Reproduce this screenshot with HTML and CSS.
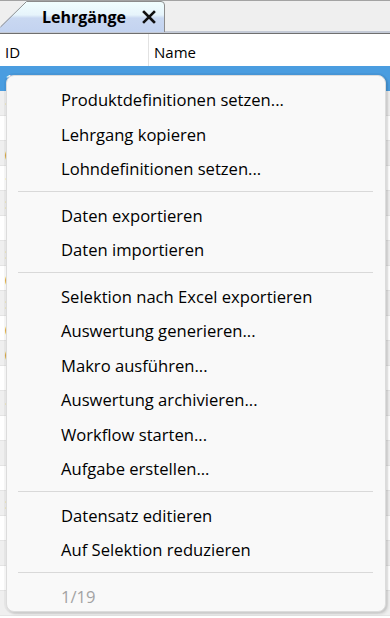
FILE: index.html
```html
<!DOCTYPE html>
<html lang="de">
<head>
    <meta charset="UTF-8">
    <meta name="viewport" content="width=device-width, initial-scale=1.0">
    <title>Lehrgänge</title>
    <link rel="stylesheet" href="styles.css">
</head>
<body>

    <div class="tab-strip">
        <div class="tab">
            <svg class="tab-shape" width="166" height="34" viewBox="0 0 166 34">
                <defs>
                    <linearGradient id="tabfill" x1="0" y1="0" x2="0" y2="1">
                        <stop offset="0" stop-color="#f2ffff"/>
                        <stop offset="0.45" stop-color="#e6f4fb"/>
                        <stop offset="0.55" stop-color="#c9d8f1"/>
                        <stop offset="1" stop-color="#c3d3f0"/>
                    </linearGradient>
                </defs>
                <path d="M0,34 L0,29 L26,3 L161,3 Q165,3 165,7 L165,34 Z" fill="url(#tabfill)"/>
                <path d="M0.5,29 L26.5,3.5 L161,3.5 Q164.5,3.5 164.5,7 L164.5,34" fill="none" stroke="#8c8c8c" stroke-width="1"/>
            </svg>
            <span class="tab-title">Lehrgänge</span>
            <svg class="tab-close" width="14" height="14" viewBox="0 0 14 14">
                <path d="M2,2 L12,12 M12,2 L2,12" stroke="#111" stroke-width="2.6" stroke-linecap="square"/>
            </svg>
        </div>
    </div>

    <div class="grid">
        <div class="grid-head">
            <div class="col col-id">ID</div>
            <div class="col col-name">Name</div>
        </div>
        <div class="row selected"><div class="col col-id">1</div><div class="col col-name"></div></div>
        <div class="row alt"><div class="col col-id">·</div><div class="col col-name"></div></div>
        <div class="row"><div class="col col-id"></div><div class="col col-name"></div></div>
        <div class="row alt"><div class="col col-id">(</div><div class="col col-name"></div></div>
        <div class="row"><div class="col col-id">·</div><div class="col col-name"></div></div>
        <div class="row alt"><div class="col col-id">:</div><div class="col col-name"></div></div>
        <div class="row"><div class="col col-id"></div><div class="col col-name"></div></div>
        <div class="row alt"><div class="col col-id">:</div><div class="col col-name"></div></div>
        <div class="row"><div class="col col-id">(</div><div class="col col-name"></div></div>
        <div class="row alt"><div class="col col-id">:</div><div class="col col-name"></div></div>
        <div class="row"><div class="col col-id">(</div><div class="col col-name"></div></div>
        <div class="row alt"><div class="col col-id">(</div><div class="col col-name"></div></div>
        <div class="row"><div class="col col-id"></div><div class="col col-name"></div></div>
        <div class="row alt"><div class="col col-id">·</div><div class="col col-name"></div></div>
        <div class="row"><div class="col col-id"></div><div class="col col-name"></div></div>
        <div class="row alt"><div class="col col-id"></div><div class="col col-name"></div></div>
        <div class="row"><div class="col col-id"></div><div class="col col-name"></div></div>
        <div class="row alt"><div class="col col-id">:</div><div class="col col-name"></div></div>
        <div class="row"><div class="col col-id"></div><div class="col col-name"></div></div>
        <div class="row alt"><div class="col col-id"></div><div class="col col-name"></div></div>
        <div class="row"><div class="col col-id"></div><div class="col col-name"></div></div>
        <div class="row alt"><div class="col col-id"></div><div class="col col-name"></div></div>

        <!-- Kontextmenü über der Tabelle -->
        <div class="context-menu">
            <div class="menu-item">Produktdefinitionen setzen...</div>
            <div class="menu-item">Lehrgang kopieren</div>
            <div class="menu-item">Lohndefinitionen setzen...</div>
            <div class="menu-sep"></div>
            <div class="menu-item">Daten exportieren</div>
            <div class="menu-item">Daten importieren</div>
            <div class="menu-sep"></div>
            <div class="menu-item">Selektion nach Excel exportieren</div>
            <div class="menu-item">Auswertung generieren...</div>
            <div class="menu-item">Makro ausführen...</div>
            <div class="menu-item">Auswertung archivieren...</div>
            <div class="menu-item">Workflow starten...</div>
            <div class="menu-item">Aufgabe erstellen...</div>
            <div class="menu-sep"></div>
            <div class="menu-item">Datensatz editieren</div>
            <div class="menu-item">Auf Selektion reduzieren</div>
            <div class="menu-sep"></div>
            <div class="menu-item disabled">1/19</div>
        </div>
    </div>

</body>
</html>
```

FILE: styles.css
```css
body {
    margin: 0;
    width: 390px;
    height: 618px;
    overflow: hidden;
    font-family: "Open Sans", "Noto Sans", sans-serif;
    background-color: #ffffff;
    color: #000;
}
.tab-strip {
    height: 33px;
    background-color: #efefef;
    border-top: 1px solid #a3a3a3;
    border-bottom: 2px solid #c4cad6;
    box-shadow: 0 1px 0 #6f6f6f;
    display: flex;
    align-items: flex-end;
    box-sizing: border-box;
}
.tab {
    position: relative;
    width: 166px;
    height: 31px;
    display: flex;
    align-items: center;
    padding-left: 42px;
    box-sizing: border-box;
}
.tab-shape {
    position: absolute;
    left: 0;
    bottom: -1px;
}
.tab-title {
    position: relative;
    font-weight: bold;
    font-size: 16px;
    margin-top: 2px;
}
.tab-close {
    position: relative;
    margin-left: 16px;
    margin-top: 3px;
}
.grid {
    position: relative;
    margin-top: 1px;
    height: 582px;
    overflow: hidden;
}
.grid-head, .row {
    display: flex;
    font-size: 15px;
}
.grid-head {
    height: 32px;
    align-items: center;
}
.grid-head .col {
    padding-top: 4px;
}
.col-id {
    width: 149px;
    padding-left: 5px;
    box-sizing: border-box;
    height: 100%;
    display: flex;
    align-items: center;
}
.grid-head .col-id {
    border-right: 1px solid #e2e2e2;
}
.col-name {
    flex: 1;
    padding-left: 5px;
}
.row {
    height: 25px;
    border-bottom: 1px solid #e4e4e4;
    box-sizing: border-box;
    color: #6b4a10;
}
.row.alt {
    background-color: #efefef;
}
.row.selected {
    background-color: #4a9de0;
    color: #fff;
    border-bottom: none;
}
.context-menu {
    position: absolute;
    left: 6px;
    top: 41px;
    width: 380px;
    height: 537px;
    box-sizing: border-box;
    padding: 7px 0 0 0;
    background-color: #f9f9f9;
    border: 1px solid #dcdcdc;
    border-radius: 8px;
    box-shadow: 0 0 0 2px rgba(0, 0, 0, 0.04), 2px 2px 3px rgba(0, 0, 0, 0.12);
    overflow: hidden;
}
.menu-item {
    height: 34.5px;
    line-height: 34.5px;
    padding-left: 54px;
    font-size: 16.6px;
    color: #000;
    white-space: nowrap;
}
.menu-item.disabled {
    color: #a3a3a3;
}
.menu-sep {
    height: 1px;
    background-color: #d9d9d9;
    margin: 4px 12px 7px 11px;
}
```
